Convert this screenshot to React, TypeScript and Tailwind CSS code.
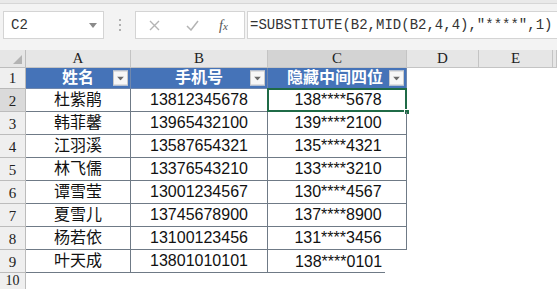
import React from "react";

const rows = [
  { name: "杜紫鹃", phone: "13812345678", masked: "138****5678" },
  { name: "韩菲馨", phone: "13965432100", masked: "139****2100" },
  { name: "江羽溪", phone: "13587654321", masked: "135****4321" },
  { name: "林飞儒", phone: "13376543210", masked: "133****3210" },
  { name: "谭雪莹", phone: "13001234567", masked: "130****4567" },
  { name: "夏雪儿", phone: "13745678900", masked: "137****8900" },
  { name: "杨若依", phone: "13100123456", masked: "131****3456" },
  { name: "叶天成", phone: "13801010101", masked: "138****0101" },
];

const serif = "font-['Liberation_Serif','DejaVu_Serif',serif]";
const cjk = "font-['Liberation_Sans','Noto_Sans_CJK_SC',sans-serif]";

const FilterButton = () => (
  <span className="absolute right-[2px] top-1/2 -translate-y-1/2 flex h-[15px] w-[15px] items-center justify-center border border-[#c9c9c9] bg-[#f7f7f7]">
    <svg width="7" height="4" viewBox="0 0 7 4">
      <path d="M0 0 L7 0 L3.5 4 Z" fill="#6b6b6b" />
    </svg>
  </span>
);

const App: React.FC = () => {
  return (
    <div className="h-[289px] w-[557px] overflow-hidden bg-white">
      {/* ribbon edge */}
      <div className="h-[4px] border-b border-[#d6d6d6] bg-[#e9e9e9]" />

      {/* formula bar */}
      <div className="flex h-[46px] items-start bg-[#f3f3f3] pt-[7px]">
        <div className="ml-[3px] flex h-[28px] w-[101px] items-center justify-between border border-[#d4d4d4] bg-white pl-[7px] pr-[6px]">
          <span className="font-['Liberation_Mono',monospace] text-[14px] text-[#333]">C2</span>
          <svg width="8" height="5" viewBox="0 0 8 5">
            <path d="M0 0 L8 0 L4 5 Z" fill="#8a8a8a" />
          </svg>
        </div>
        <div className="flex h-[28px] w-[31px] flex-col items-center justify-center gap-[3px]">
          <span className="h-[2px] w-[2px] bg-[#b0b0b0]" />
          <span className="h-[2px] w-[2px] bg-[#b0b0b0]" />
          <span className="h-[2px] w-[2px] bg-[#b0b0b0]" />
        </div>
        <div className="flex h-[28px] w-[110px] items-center border border-[#d4d4d4] bg-white pl-[13px]">
          <svg width="11" height="11" viewBox="0 0 11 11" className="mr-[26px]">
            <path d="M1 1 L10 10 M10 1 L1 10" stroke="#b4b4b4" strokeWidth="1.4" />
          </svg>
          <svg width="13" height="11" viewBox="0 0 13 11" className="mr-[20px]">
            <path d="M1 6 L5 10 L12 1" stroke="#b4b4b4" strokeWidth="1.5" fill="none" />
          </svg>
          <span className="font-['Liberation_Serif',serif] text-[14px] italic text-[#555]">
            f<span className="text-[11px]">x</span>
          </span>
        </div>
        <div className="ml-[2px] flex h-[28px] flex-1 items-center border border-r-0 border-[#d4d4d4] bg-white pl-[2px]">
          <span className="whitespace-nowrap font-['Liberation_Mono',monospace] text-[14px] text-[#333]">
            =SUBSTITUTE(B2,MID(B2,4,4),"****",1)
          </span>
        </div>
      </div>

      {/* sheet grid */}
      <div className="grid grid-cols-[26px_105px_137px_139px_72px_74px_1fr]">
        {/* column headers */}
        <div className="relative h-[18px] border-b border-r border-[#bdbdbd] bg-[#e6e6e6]">
          <svg width="9" height="9" viewBox="0 0 9 9" className="absolute bottom-[3px] right-[3px]">
            <path d="M9 0 L9 9 L0 9 Z" fill="#b3b3b3" />
          </svg>
        </div>
        {["A", "B", "C", "D", "E", ""].map((c) => (
          <div
            key={c || "x"}
            className={`flex h-[18px] items-center justify-center border-b border-r border-[#c4c4c4] text-[15px] leading-none text-[#222] ${serif} ${
              c === "C" ? "bg-[#d3d3d3]" : "bg-[#e6e6e6]"
            }`}
          >
            {c}
          </div>
        ))}

        {/* row 1: table header */}
        <div className={`flex h-[21px] items-center justify-center border-b border-r border-[#b9b9b9] bg-[#efefef] text-[15px] text-[#222] ${serif}`}>
          1
        </div>
        {["姓名", "手机号", "隐藏中间四位"].map((h) => (
          <div
            key={h}
            className={`relative flex h-[21px] items-center justify-center border-b border-r border-[#6f87ad] bg-[#4573b8] text-[16px] font-bold text-white ${cjk}`}
          >
            <span className={h.length > 3 ? "pr-[4px]" : ""}>{h}</span>
            <FilterButton />
          </div>
        ))}
        <div className="h-[21px]" />
        <div className="h-[21px]" />
        <div className="h-[21px]" />

        {/* data rows */}
        {rows.map((r, i) => {
          const n = i + 2;
          const last = n === 9;
          return (
            <React.Fragment key={n}>
              <div
                className={`flex h-[23px] items-center justify-center border-b border-r border-[#bcbcbc] pt-[3px] text-[15px] text-[#222] ${serif} ${
                  n === 2 ? "bg-[#dadada]" : "bg-[#efefef]"
                }`}
              >
                {n}
              </div>
              <div className={`flex h-[23px] items-center justify-center border-b border-r border-[#6f7a86] text-[16px] text-[#111] ${cjk}`}>
                {r.name}
              </div>
              <div className="flex h-[23px] items-center justify-center border-b border-r border-[#6f7a86] font-['Liberation_Sans',Arial,sans-serif] text-[16px] text-[#111]">
                {r.phone}
              </div>
              <div
                className={`relative flex h-[23px] items-center justify-center font-['Liberation_Sans',Arial,sans-serif] text-[16px] text-[#111] ${
                  last ? "" : "border-b border-r border-[#6f7a86]"
                }`}
              >
                <span className="pl-[2px]">{r.masked}</span>
                {last && <span className="absolute bottom-0 left-0 h-px w-[117px] bg-[#6f7a86]" />}
                {n === 2 && (
                  <>
                    <span className="absolute inset-[-1px] border-2 border-[#1f6b47]" />
                    <span className="absolute bottom-[-4px] right-[-4px] h-[6px] w-[6px] border border-white bg-[#1f6b47]" />
                  </>
                )}
              </div>
              <div className="h-[23px]" />
              <div className="h-[23px]" />
              <div className="h-[23px]" />
            </React.Fragment>
          );
        })}

        {/* row 10 */}
        <div className={`flex h-[16px] items-start justify-center border-r border-[#bcbcbc] bg-[#efefef] pt-[1px] text-[14px] leading-[14px] text-[#222] ${serif}`}>
          10
        </div>
        <div className="h-[16px]" />
        <div className="h-[16px]" />
        <div className="h-[16px]" />
        <div className="h-[16px]" />
        <div className="h-[16px]" />
        <div className="h-[16px]" />
      </div>
    </div>
  );
};

export default App;
